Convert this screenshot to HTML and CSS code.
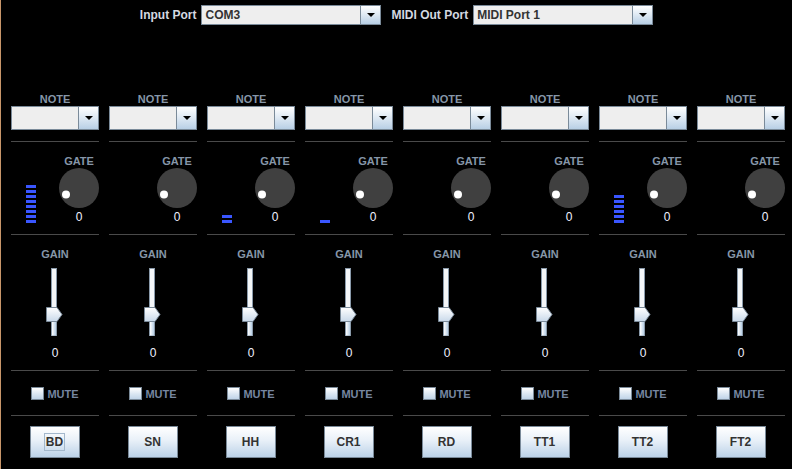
FILE: index.html
```html
<!DOCTYPE html>
<html>
<head>
<meta charset="utf-8">
<link rel="stylesheet" href="styles.css">
</head>
<body>
<div class="app">
  <div class="top">
    <span class="toplbl">Input Port</span>
    <div class="combo topcombo"><span class="ctext">COM3</span><span class="carrow"><i></i></span></div>
    <span class="toplbl second">MIDI Out Port</span>
    <div class="combo topcombo"><span class="ctext">MIDI Port 1</span><span class="carrow"><i></i></span></div>
  </div>
  <div class="strip" id="strip"></div>
</div>
<script>
  var names = ["BD","SN","HH","CR1","RD","TT1","TT2","FT2"];
  var levels = [8,0,2,1,0,0,6,0];
  var strip = document.getElementById("strip");
  var slider = '<svg class="slider" width="17" height="68" viewBox="0 0 17 68">' +
    '<defs><linearGradient id="tg" x1="0" x2="1" y1="0" y2="0"><stop offset="0" stop-color="#ffffff"/><stop offset="1" stop-color="#b8cfe5"/></linearGradient>' +
    '<linearGradient id="hg" x1="0" x2="0" y1="0" y2="1"><stop offset="0" stop-color="#ffffff"/><stop offset="1" stop-color="#c9d9ea"/></linearGradient></defs>' +
    '<rect x="5.5" y="0.5" width="5" height="67" fill="#f4f6f8" stroke="#8a9aaa"/>' +
    '<rect x="6" y="50" width="4" height="17.5" fill="url(#tg)"/>' +
    '<path d="M0.5 39.5 H11 L16 46.5 L11 53.5 H0.5 Z" fill="url(#hg)" stroke="#7a8a99"/>' +
    '</svg>';
  var knob = '<svg class="knob" width="40" height="40" viewBox="0 0 40 40">' +
    '<circle cx="20" cy="20" r="20" fill="#404040"/>' +
    '<circle cx="7" cy="26.5" r="4" fill="#ffffff"/></svg>';
  names.forEach(function (n, i) {
    var bars = "";
    for (var b = 0; b < levels[i]; b++) bars += '<div class="bar"></div>';
    var ch = document.createElement("div");
    ch.className = "ch";
    ch.innerHTML =
      '<div class="lbl">NOTE</div>' +
      '<div class="combo notecombo"><span class="ctext"></span><span class="carrow"><i></i></span></div>' +
      '<div class="sep"></div>' +
      '<div class="gate">' +
        '<div class="meter">' + bars + '</div>' +
        '<div class="knobcol"><div class="lbl">GATE</div>' + knob + '<div class="val">0</div></div>' +
      '</div>' +
      '<div class="sep"></div>' +
      '<div class="gain"><div class="lbl">GAIN</div>' + slider + '<div class="val">0</div></div>' +
      '<div class="sep"></div>' +
      '<div class="mute"><span class="chk"></span><span class="mutelbl">MUTE</span></div>' +
      '<div class="sep"></div>' +
      '<div class="btnrow"><div class="btn"><span class="btext' + (i === 0 ? ' focus' : '') + '">' + n + '</span></div></div>';
    strip.appendChild(ch);
  });
</script>
</body>
</html>
```
FILE: styles.css
```css
html, body {
  margin: 0;
  padding: 0;
  background: #000;
}
body {
  width: 792px;
  height: 469px;
  overflow: hidden;
  font-family: "Liberation Sans", Arial, sans-serif;
}
.app {
  box-sizing: border-box;
  width: 792px;
  height: 469px;
  border-left: 1px solid #c8966a;
}
.top {
  height: 30px;
  display: flex;
  align-items: flex-start;
  justify-content: center;
  padding-top: 5px;
  box-sizing: border-box;
}
.toplbl {
  font-size: 12px;
  font-weight: bold;
  color: #d4d8e0;
  line-height: 20px;
  margin-right: 5px;
}
.toplbl.second {
  margin-left: 10px;
}
.combo {
  box-sizing: border-box;
  display: flex;
  border: 1px solid #7a8a99;
  background: #eeeeee;
}
.topcombo {
  width: 180px;
  height: 20px;
}
.ctext {
  flex: 1;
  font-size: 12px;
  font-weight: bold;
  color: #333;
  line-height: 18px;
  padding-left: 3px;
}
.carrow {
  width: 19px;
  border-left: 1px solid #7a8a99;
  background: linear-gradient(#ffffff, #dde8f3 50%, #b8cfe5);
  display: flex;
  align-items: center;
  justify-content: center;
}
.carrow i {
  width: 0;
  height: 0;
  border-left: 4px solid transparent;
  border-right: 4px solid transparent;
  border-top: 4px solid #000;
}
.strip {
  display: flex;
  gap: 10px;
  padding-left: 10px;
  margin-top: 62px;
}
.ch {
  width: 88px;
  display: flex;
  flex-direction: column;
}
.lbl {
  font-size: 11px;
  font-weight: bold;
  color: #8696a8;
  line-height: 14px;
  height: 14px;
  text-align: center;
}
.notecombo {
  width: 88px;
  height: 24px;
}
.sep {
  height: 1px;
  background: #4a4a4a;
}
.notecombo + .sep {
  margin-top: 11px;
}
.gate {
  height: 92px;
  display: flex;
}
.meter {
  width: 10px;
  margin-left: 15px;
  margin-right: 23px;
  align-self: flex-end;
  margin-bottom: 11px;
  display: flex;
  flex-direction: column;
  gap: 2px;
}
.bar {
  height: 3px;
  background: #3a56ff;
}
.knobcol {
  width: 40px;
  padding-top: 12px;
  display: flex;
  flex-direction: column;
  align-items: center;
}
.knob {
  display: block;
}
.val {
  font-size: 12px;
  color: #eef3ff;
  line-height: 14px;
  height: 14px;
  text-align: center;
  margin-top: 2px;
}
.gain {
  height: 135px;
  padding-top: 12px;
  box-sizing: border-box;
  display: flex;
  flex-direction: column;
  align-items: center;
}
.gain .lbl {
  width: 88px;
}
.slider {
  display: block;
  margin-top: 7px;
  margin-right: 1px;
}
.gain .val {
  margin-top: 10px;
  width: 88px;
}
.mute {
  height: 44px;
  display: flex;
  justify-content: center;
  align-items: flex-start;
  padding-top: 16px;
  box-sizing: border-box;
}
.chk {
  width: 13px;
  height: 13px;
  box-sizing: border-box;
  border: 1px solid #7a8a99;
  background: linear-gradient(#ffffff, #dde8f3 50%, #c0d4e8);
  margin-right: 3px;
}
.mutelbl {
  font-size: 11px;
  font-weight: bold;
  color: #7686a0;
  line-height: 14px;
}
.btnrow {
  display: flex;
  justify-content: center;
  padding-top: 10px;
  padding-right: 1px;
}
.btn {
  width: 50px;
  height: 32px;
  box-sizing: border-box;
  border: 1px solid #7a8a99;
  background: linear-gradient(#ffffff, #e8f0f8 45%, #bcd2e8);
  display: flex;
  align-items: center;
  justify-content: center;
}
.btext {
  font-size: 12px;
  font-weight: bold;
  color: #333;
  line-height: 16px;
  padding: 0 1px;
  border: 1px solid transparent;
}
.btext.focus {
  border-color: #a3b8cc;
}
```
